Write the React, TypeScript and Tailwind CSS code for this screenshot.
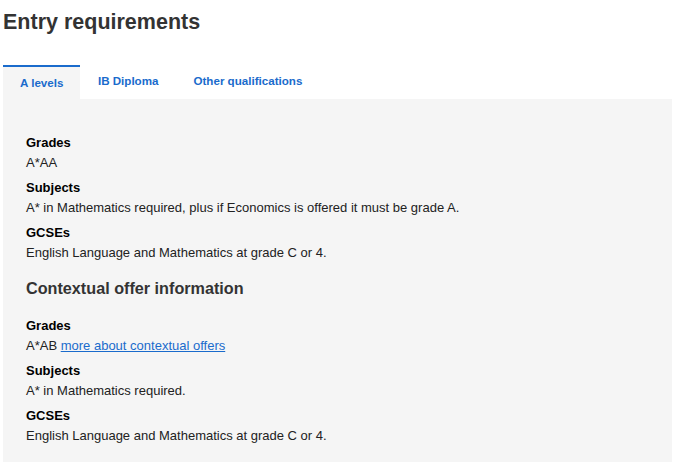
const tabs = ["A levels", "IB Diploma", "Other qualifications"];

function Item({ label, children }: { label: string; children: React.ReactNode }) {
  return (
    <div className="mb-[5px]">
      <p className="text-[13px] font-bold leading-[20px] text-black">{label}</p>
      <p className="text-[13px] leading-[20px] text-[#222]">{children}</p>
    </div>
  );
}

export default function App() {
  return (
    <div className="h-[464px] w-[674px] bg-white pl-[3px] pr-[2px] font-['Liberation_Sans',Arial,sans-serif]">
      <h2 className="pt-[8px] text-[21.5px] font-bold leading-[28px] text-[#333]">Entry requirements</h2>

      <div className="mt-[29px] flex">
        {tabs.map((tab, i) => (
          <button
            key={tab}
            type="button"
            className={`h-[34px] text-[11.6px] font-bold text-[#1a6bcc] ${
              i === 0
                ? "border-t-2 border-[#1a6bcc] bg-[#f5f5f5] px-[17px] pb-[1px]"
                : "border-t-2 border-transparent px-[17.5px] pb-[5px]"
            }`}
          >
            {tab}
          </button>
        ))}
      </div>

      <div className="h-[363px] bg-[#f5f5f5] px-[23px] pt-[34px]">
        <Item label="Grades">A*AA</Item>
        <Item label="Subjects">A* in Mathematics required, plus if Economics is offered it must be grade A.</Item>
        <Item label="GCSEs">English Language and Mathematics at grade C or 4.</Item>

        <h3 className="mt-[14px] mb-[17px] text-[16.2px] font-bold leading-[22px] text-[#333]">
          Contextual offer information
        </h3>

        <Item label="Grades">
          A*AB{" "}
          <a href="#" className="text-[#1a6bcc] underline">
            more about contextual offers
          </a>
        </Item>
        <Item label="Subjects">A* in Mathematics required.</Item>
        <Item label="GCSEs">English Language and Mathematics at grade C or 4.</Item>
      </div>
    </div>
  );
}
